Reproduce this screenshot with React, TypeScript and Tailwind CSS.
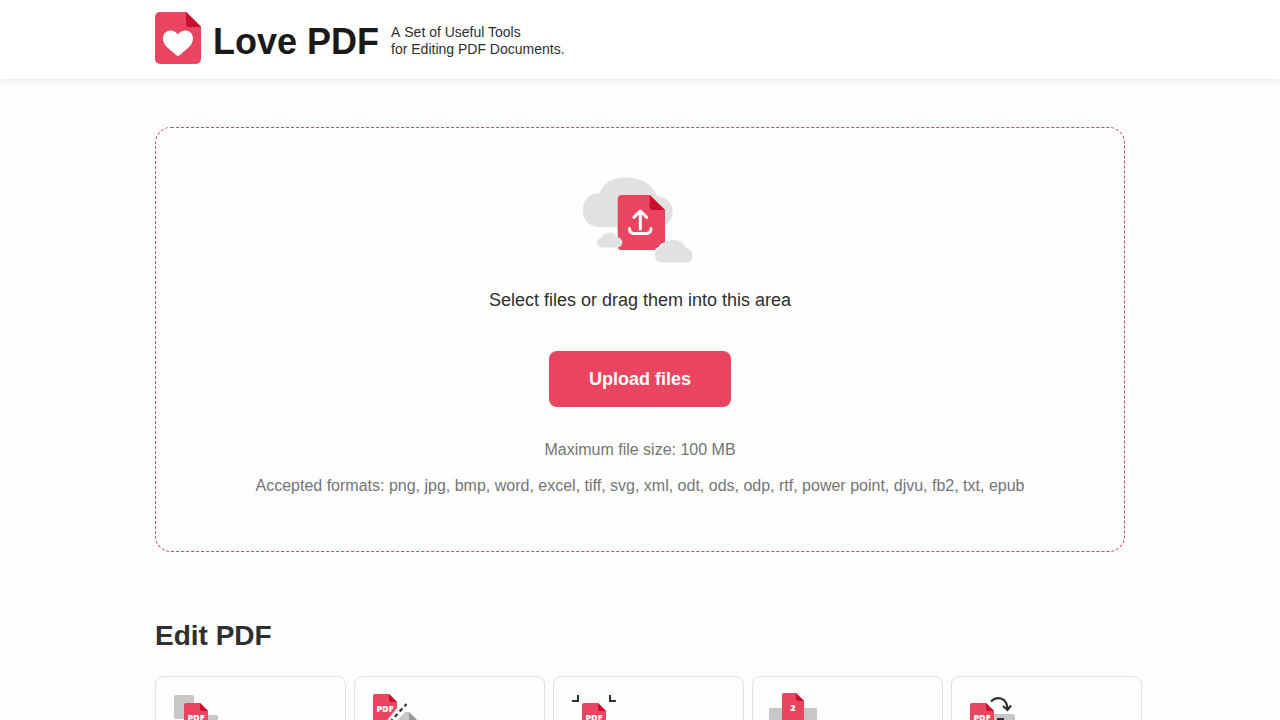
import type { ReactNode } from "react";

function LogoIcon() {
  return (
    <svg width="46" height="52" viewBox="0 0 46 52" aria-hidden="true" className="shrink-0">
      <path d="M5 0H31.5L46 14.5V47a5 5 0 0 1-5 5H5a5 5 0 0 1-5-5V5a5 5 0 0 1 5-5Z" fill="#ea4560" />
      <path d="M31 0 46 15H34a3 3 0 0 1-3-3Z" fill="#c8102e" />
      <path
        d="M23 44C22 44 20.500 42.600 19 41C14 37 8 33 8 26.500C8 21.500 11.500 18.500 15.500 18.500C19 18.500 21.500 20.500 23 22.500C24.500 20.500 27 18.500 30.500 18.500C34.500 18.500 38 21.500 38 26.500C38 33 32 37 27 41C25.500 42.600 24 44 23 44Z"
        fill="#fff"
      />
    </svg>
  );
}

function UploadArt() {
  return (
    <svg width="120" height="90" viewBox="0 0 120 90" aria-hidden="true">
      <path
        d="M19 51.300C-3 50 -2.500 17.500 19.500 17C23 7 33 1.500 46 1.500C61 1.500 72 8 77 20C98 22 97 49 79 51.300Z"
        fill="#e1e1e1"
      />
      <path
        d="M41.700 19H70L85 34V66.500C81 67 79.500 69 79 71C76 71.500 75.500 72.500 75 74H41.700a4 4 0 0 1-4-4V23a4 4 0 0 1 4-4Z"
        fill="#ea4560"
      />
      <path d="M69.700 19 85 34H73a3.300 3.300 0 0 1-3.300-3.300Z" fill="#c8102e" />
      <g fill="none" stroke="#fff" strokeWidth="3" strokeLinecap="round" strokeLinejoin="round">
        <path d="M60.300 53V35.500M53.800 41.300 60.300 35 66.800 41.300" />
        <path d="M49.500 52.500C49.500 56 51 57.500 54 57.500H66.500C69.500 57.500 71 56 71 52.500" />
      </g>
      <path
        d="M22 71.500A4.700 4.700 0 0 1 21.500 62C23 58.500 26 56.700 29.800 56.700C33.500 56.700 35.500 58.200 37 61C44 61.500 44 71.500 37.500 71.500Z"
        fill="#e1e1e1"
      />
      <path
        d="M81.500 86.500C73 86.500 72.500 72.500 81 71.200C83.500 66.500 87.500 64 93.500 64C99.500 64 103.500 66.500 105.500 72C114.800 73 114.800 86.500 105.500 86.500Z"
        fill="#e1e1e1"
      />
    </svg>
  );
}

function Label({ x, y, children }: { x: number; y: number; children: ReactNode }) {
  return (
    <text
      x={x}
      y={y}
      textAnchor="middle"
      fill="#fff"
      fontSize="9"
      fontWeight="900"
      fontFamily='"Noto Sans", "Open Sans", sans-serif'
    >
      {children}
    </text>
  );
}

function Sheet({ x, y, label, width = 24 }: { x: number; y: number; label: string; width?: number }) {
  return (
    <g transform={`translate(${x} ${y})`}>
      <path d={`M2 0H${width - 8}L${width} 8V26a2 2 0 0 1-2 2H2a2 2 0 0 1-2-2V2a2 2 0 0 1 2-2Z`} fill="#ea4560" />
      <path d={`M${width - 8} 0l8 8h-6a2 2 0 0 1-2-2Z`} fill="#c8102e" />
      <Label x={width / 2} y={18}>
        {label}
      </Label>
    </g>
  );
}

function ToolIcon({ children }: { children: ReactNode }) {
  return (
    <svg width="48" height="48" viewBox="0 0 48 48" aria-hidden="true">
      {children}
    </svg>
  );
}

const tools = [
  {
    name: "merge",
    icon: (
      <ToolIcon>
        <rect x="2" y="2" width="20" height="24" rx="1.500" fill="#c7c7c7" />
        <rect x="26" y="22" width="20" height="24" rx="1.500" fill="#c7c7c7" />
        <Sheet x={12} y={10} label="PDF" />
      </ToolIcon>
    ),
  },
  {
    name: "split",
    icon: (
      <ToolIcon>
        <path d="M4 1H18L26 9V15L13 31H4a2 2 0 0 1-2-2V3a2 2 0 0 1 2-2Z" fill="#ea4560" />
        <path d="M18 1l8 8h-6a2 2 0 0 1-2-2Z" fill="#c8102e" />
        <Label x={14} y={19}>
          PDF
        </Label>
        <path d="M35.500 11 15.500 33" fill="none" stroke="#2f2f2f" strokeWidth="2.200" strokeDasharray="4 3.200" strokeDashoffset="1" />
        <path d="M22 34V32L34 19H38L46 27V44H22Z" fill="#c7c7c7" />
        <path d="M38 19l8 8h-8Z" fill="#999" />
      </ToolIcon>
    ),
  },
  {
    name: "compress",
    icon: (
      <ToolIcon>
        <path
          d="M2 8H8V2M46 8H40V2M2 40H8V46M46 40H40V46"
          fill="none"
          stroke="#2f2f2f"
          strokeWidth="2"
        />
        <Sheet x={12} y={10} label="PDF" />
      </ToolIcon>
    ),
  },
  {
    name: "pages",
    icon: (
      <ToolIcon>
        <rect x="0" y="15" width="48" height="26" rx="1.500" fill="#c7c7c7" />
        <Sheet x={13} y={0} label="2" width={22} />
      </ToolIcon>
    ),
  },
  {
    name: "convert",
    icon: (
      <ToolIcon>
        <rect x="24" y="21" width="23" height="25" rx="1.500" fill="#c7c7c7" />
        <path d="M29 26.500h7M32.500 26v9" stroke="#2f2f2f" strokeWidth="3" />
        <Sheet x={2} y={10} label="PDF" />
        <path d="M23 8.500C28 3 39 3.500 39.500 16.500M35 13 39.500 17 43 12.500" fill="none" stroke="#2f2f2f" strokeWidth="2.200" />
      </ToolIcon>
    ),
  },
];

export default function App() {
  return (
    <div className="min-h-screen bg-[#fdfdfd] font-['Liberation_Sans',Arial,sans-serif] text-[#2f2f2f]">
      <header className="bg-white pt-3 pb-[15px] shadow-[0_0_8px_rgba(0,0,0,0.12)]">
        <div className="mx-auto flex max-w-[970px] items-center">
          <a href="#" className="flex items-center gap-3 text-4xl font-bold text-[#1a1a1a]">
            <LogoIcon />
            <span className="pt-2">Love PDF</span>
          </a>
          <p className="ml-3 pt-1.5 text-sm leading-[17px]">
            A&nbsp;Set of Useful Tools
            <br />
            for Editing PDF Documents.
          </p>
        </div>
      </header>

      <main className="mx-auto max-w-[970px] pt-12">
        <section className="flex flex-col items-center rounded-2xl border border-dashed border-[#b85468] bg-[#fefefe] px-6 pt-12 pb-[53px] text-center">
          <UploadArt />
          <p className="mt-5 text-lg leading-7">Select files or drag them into this area</p>
          <button
            type="button"
            className="mt-[37px] h-14 rounded-lg bg-[#ea4560] px-10 text-lg font-bold text-white"
          >
            Upload files
          </button>
          <p className="mt-[31px] text-base text-[#757575]">Maximum file size: 100 MB</p>
          <p className="mt-3 text-base text-[#757575]">
            Accepted formats: png, jpg, bmp, word, excel, tiff, svg, xml, odt, ods, odp, rtf, power point, djvu, fb2,
            txt, epub
          </p>
        </section>

        <section className="pt-16">
          <h2 className="text-[28px] leading-10 font-bold">Edit PDF</h2>
          <ul className="-mr-[17px] mt-5 grid grid-cols-5 gap-2">
            {tools.map((tool) => (
              <li key={tool.name} className="rounded-lg border border-[#e1e1e1] bg-[#fefefe] px-4 pt-4 pb-20">
                {tool.icon}
              </li>
            ))}
          </ul>
        </section>
      </main>
    </div>
  );
}
